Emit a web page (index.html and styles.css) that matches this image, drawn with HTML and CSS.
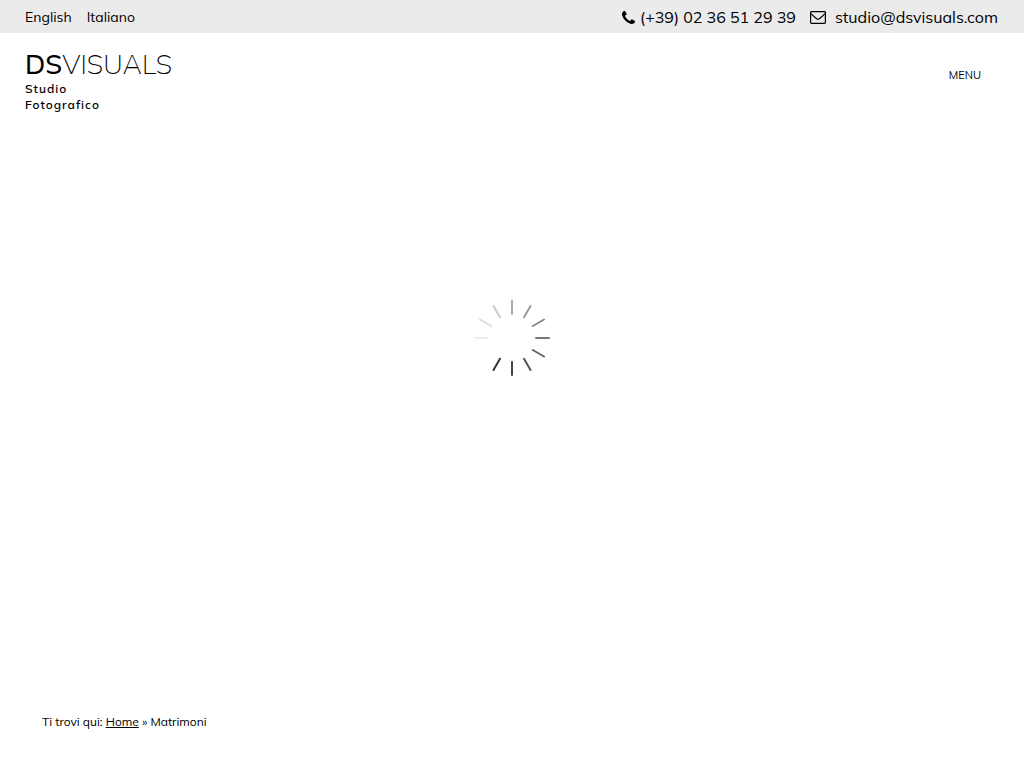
FILE: index.html
```
<!DOCTYPE html>
<html lang="it">
<head>
    <meta charset="UTF-8">
    <meta name="viewport" content="width=device-width, initial-scale=1.0">
    <title>Matrimoni - DSVISUALS Studio Fotografico</title>
    <link rel="stylesheet" href="styles.css">
</head>
<body>
    <!-- top bar -->
    <div class="topbar">
        <nav class="languages">
            <a href="#">English</a>
            <a href="#">Italiano</a>
        </nav>
        <div class="contacts">
            <a class="phone" href="tel:+390236512939">
                <svg class="icon-phone" viewBox="0 0 1408 1408" aria-hidden="true">
                    <path d="M1408 1112q0 27-10 70.500t-21 68.500q-21 50-122 106-94 51-186 51-27 0-52.500-3.500t-57.500-12.500-47.500-14.500-55.500-20.500-49-18q-98-35-175-83-128-79-264.500-215.500t-215.500-264.500q-48-77-83-175-3-9-18-49t-20.500-55.500-14.500-47.500-12.500-57.500-3.500-52.500q0-92 51-186 56-101 106-122 25-11 68.500-21t70.500-10q14 0 21 3 18 6 53 76 11 19 30 54t35 63.500 31 53.500q3 4 17.500 25t21.500 35.500 7 28.500q0 20-28.500 50t-62 55-62 53-28.500 46q0 9 5 22.500t8.500 20.500 14 24 11.500 19q76 137 174 235t235 174q2 1 19 11.500t24 14 20.500 8.500 22.500 5q18 0 46-28.500t53-62 55-62 50-28.500q14 0 28.500 7t35.500 21.500 25 17.500q25 15 53.500 31t63.500 35 54 30q70 35 76 53 3 7 3 21z"/>
                </svg>
                <span>(+39) 02 36 51 29 39</span>
            </a>
            <a class="mail" href="mailto:studio@dsvisuals.com">
                <svg class="icon-mail" viewBox="0 0 16 13" aria-hidden="true">
                    <rect x="0.600" y="0.600" width="14.800" height="11.800" rx="0.800"/>
                    <path d="M1 2.500C3 5 5 6.200 6.700 7.700Q8 8.700 9.300 7.700C11 6.200 13 5 15 2.500"/>
                </svg>
                <span>studio@dsvisuals.com</span>
            </a>
        </div>
    </div>

    <!-- header -->
    <header class="header">
        <a class="brand" href="#">
            <span class="logo"><b>DS</b>VISUALS</span>
            <span class="tagline">Studio Fotografico</span>
        </a>
        <button class="menu-button" type="button">MENU</button>
    </header>

    <!-- gallery loader -->
    <main class="gallery">
        <svg class="spinner" viewBox="-40 -40 80 80" role="img" aria-label="Caricamento">
            <path stroke="#aaaaaa" d="M0-24V-37"/>
            <path stroke="#999999" d="M0-24V-37" transform="rotate(30)"/>
            <path stroke="#888888" d="M0-24V-37" transform="rotate(60)"/>
            <path stroke="#777777" d="M0-24V-37" transform="rotate(90)"/>
            <path stroke="#666666" d="M0-24V-37" transform="rotate(120)"/>
            <path stroke="#555555" d="M0-24V-37" transform="rotate(150)"/>
            <path stroke="#444444" d="M0-24V-37" transform="rotate(180)"/>
            <path stroke="#333333" d="M0-24V-37" transform="rotate(210)"/>
            <path stroke="#fdfdfd" d="M0-24V-37" transform="rotate(240)"/>
            <path stroke="#eeeeee" d="M0-24V-37" transform="rotate(270)"/>
            <path stroke="#dddddd" d="M0-24V-37" transform="rotate(300)"/>
            <path stroke="#cccccc" d="M0-24V-37" transform="rotate(330)"/>
        </svg>
    </main>

    <nav class="breadcrumbs">Ti trovi qui: <a href="#">Home</a> » Matrimoni</nav>
</body>
</html>
```
FILE: styles.css
```
body {
    margin: 0;
    min-height: 100vh;
    display: flex;
    flex-direction: column;
    background: #fff;
    color: #000;
    font-family: Muli, Mulish, "Noto Sans", sans-serif;
}

a {
    color: inherit;
    text-decoration: none;
}

/* top bar */
.topbar {
    display: flex;
    justify-content: space-between;
    align-items: center;
    padding: 2px 26px 0 25px;
    background: #ebebeb;
    line-height: 31px;
}

.languages {
    display: flex;
    gap: 15px;
    font-size: 14px;
}

.contacts {
    display: flex;
    gap: 14px;
    font-size: 16px;
}

.phone,
.mail {
    display: flex;
    align-items: center;
    gap: 5px;
}

.mail {
    gap: 9px;
}

.icon-phone {
    width: 13px;
    height: 13px;
}

.icon-mail {
    width: 16px;
    height: 13px;
    fill: none;
    stroke: #000;
    stroke-width: 1.2;
}

/* header */
.header {
    display: flex;
    justify-content: space-between;
    align-items: flex-start;
    padding: 15px 43px 16px 25px;
}

.brand {
    display: flex;
    flex-direction: column;
}

.logo {
    font-size: 27px;
    font-weight: 200;
    line-height: 33px;
}

.logo b {
    font-weight: 500;
}

.tagline {
    width: 100px;
    font-size: 12px;
    font-weight: 600;
    line-height: 16px;
    letter-spacing: 1px;
}

.menu-button {
    margin-top: 19px;
    padding: 0;
    border: 0;
    background: none;
    color: inherit;
    font-family: inherit;
    font-size: 11px;
    line-height: 16px;
    cursor: pointer;
}

/* loader */
.gallery {
    flex: 1;
    padding-top: 169px;
    text-align: center;
}

.spinner {
    width: 80px;
    height: 80px;
    stroke-width: 2;
    stroke-linecap: round;
}

/* breadcrumbs */
.breadcrumbs {
    padding: 0 42px 38px;
    font-size: 12px;
    line-height: 16px;
}

.breadcrumbs a {
    text-decoration: underline;
}
```
